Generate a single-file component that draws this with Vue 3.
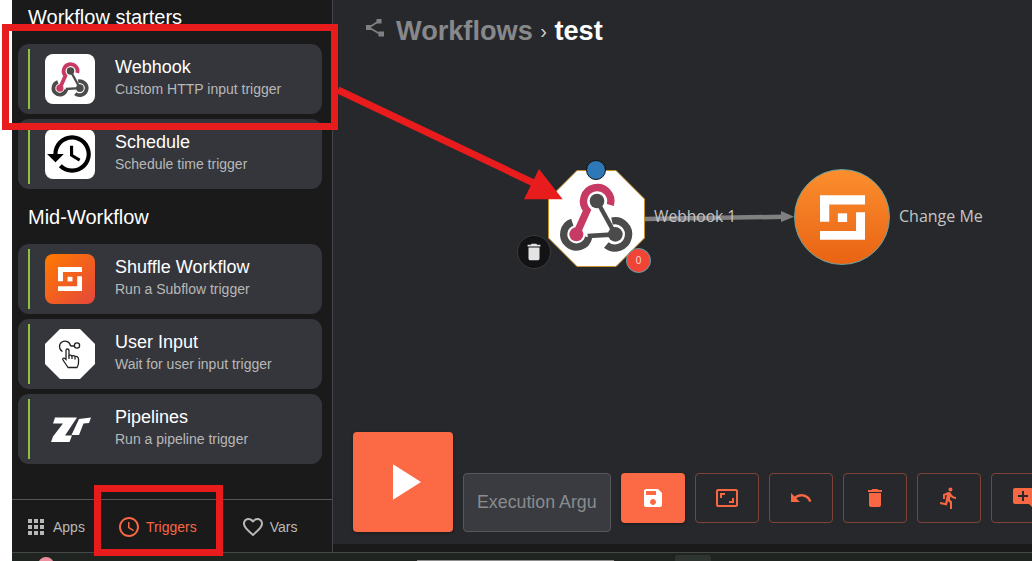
<script setup>
const starters = [
  { title: 'Webhook', sub: 'Custom HTTP input trigger', icon: 'webhook' },
  { title: 'Schedule', sub: 'Schedule time trigger', icon: 'history' },
]
const mids = [
  { title: 'Shuffle Workflow', sub: 'Run a Subflow trigger', icon: 'shuffle' },
  { title: 'User Input', sub: 'Wait for user input trigger', icon: 'touch' },
  { title: 'Pipelines', sub: 'Run a pipeline trigger', icon: 'pipe' },
]
const tools = [
  { name: 'fit', d: 'M19 12h-2v3h-3v2h5v-5zM7 9h3V7H5v5h2V9zm14-6H3c-1.1 0-2 .9-2 2v14c0 1.1.9 2 2 2h18c1.1 0 2-.9 2-2V5c0-1.1-.9-2-2-2zm0 16.01H3V4.99h18v14.02z' },
  { name: 'undo', d: 'M12.5 8c-2.65 0-5.05.99-6.9 2.6L2 7v9h9l-3.62-3.62c1.39-1.16 3.16-1.88 5.12-1.88 3.54 0 6.55 2.31 7.6 5.5l2.37-.78C21.08 11.03 17.15 8 12.5 8z' },
  { name: 'delete', d: 'M6 19c0 1.1.9 2 2 2h8c1.1 0 2-.9 2-2V7H6v12zM19 4h-3.5l-1-1h-5l-1 1H5v2h14V4z' },
  { name: 'run', d: 'M13.49 5.48c1.1 0 2-.9 2-2s-.9-2-2-2-2 .9-2 2 .9 2 2 2zm-3.6 13.9l1-4.4 2.1 2v6h2v-7.5l-2.1-2 .6-3c1.3 1.5 3.3 2.5 5.5 2.5v-2c-1.9 0-3.5-1-4.3-2.4l-1-1.6c-.4-.6-1-1-1.7-1-.3 0-.5.1-.8.1l-5.2 2.2v4.7h2v-3.4l1.8-.7-1.6 8.1-4.9-1-.4 2 7 1.4z' },
  { name: 'comment', d: 'M21.99 4c0-1.1-.89-2-1.99-2H4c-1.1 0-2 .9-2 2v12c0 1.1.9 2 2 2h14l4 4-.01-18zM17 11h-4v4h-2v-4H7V9h4V5h2v4h4v2z' },
]
</script>

<template>
  <div class="page">
    <svg class="defs" aria-hidden="true">
      <defs>
        <symbol id="webhook" viewBox="170 120 240 225">
          <path d="M228 283L260 211A41 41 0 1 1 330 195" fill="none" stroke="#c73a63" stroke-width="22" />
          <circle cx="228" cy="283" r="21" fill="#c73a63" />
          <path d="M290 183L345 283" fill="none" stroke="#4b4b4b" stroke-width="13" />
          <path d="M216 247A38 38 0 1 0 265 292" fill="none" stroke="#4b4b4b" stroke-width="22" />
          <path d="M335 243A41 41 0 1 1 318 315" fill="none" stroke="#4b4b4b" stroke-width="22" />
          <path d="M262 288L345 283" fill="none" stroke="#4b4b4b" stroke-width="14" />
          <circle cx="290" cy="183" r="22" fill="#4b4b4b" />
          <circle cx="345" cy="283" r="22" fill="#4b4b4b" />
        </symbol>
        <symbol id="shuffle" viewBox="0 0 136 135">
          <path d="M0 0H136V28H28V80H0Z" fill="#fff" />
          <path d="M109 52H136V135H0V108H109Z" fill="#fff" />
          <rect x="54" y="55" width="28" height="26" fill="#fff" />
        </symbol>
      </defs>
    </svg>

    <div class="top">
      <aside class="side">
        <div class="list">
          <h2 class="heading first">Workflow starters</h2>
          <div v-for="c in starters" :key="c.title" class="card">
            <span class="bar"></span>
            <span class="tile" :class="c.icon">
              <svg v-if="c.icon === 'webhook'" class="logo-hook"><use href="#webhook" /></svg>
              <svg v-else viewBox="0 0 24 24" class="logo-hist"><path fill="#000" d="M13 3c-4.97 0-9 4.03-9 9H1l3.89 3.89.07.14L9 12H6c0-3.87 3.13-7 7-7s7 3.13 7 7-3.13 7-7 7c-1.93 0-3.68-.79-4.94-2.06l-1.42 1.42C8.27 19.99 10.51 21 13 21c4.97 0 9-4.03 9-9s-4.03-9-9-9zm-1 5v5l4.28 2.54.72-1.21-3.5-2.08V8H12z" /></svg>
            </span>
            <span class="txt"><b class="t">{{ c.title }}</b><span class="s">{{ c.sub }}</span></span>
          </div>
          <h2 class="heading">Mid-Workflow</h2>
          <div v-for="c in mids" :key="c.title" class="card">
            <span class="bar"></span>
            <span class="tile" :class="c.icon">
              <svg v-if="c.icon === 'shuffle'" class="logo-shuf"><use href="#shuffle" /></svg>
              <svg v-else-if="c.icon === 'touch'" viewBox="0 0 50 50" class="logo-full" fill="none" stroke="#222" stroke-width="1.300">
                <path d="M17.500 22.500A5.500 5.500 0 1 1 25.500 17" />
                <path d="M25.500 17H29.500" />
                <circle cx="32" cy="16.500" r="2.600" />
                <path fill="#fff" d="M23 38.500L18 31C17 29.500 18.800 28.500 20 29.500L21 30.500V21.500C21 19.500 24 19.500 24 21.500V26.500C25 25.800 26.500 26 27 27C28 26.300 29.500 26.500 30 27.500C31 27.100 33.500 27.500 33.500 30V34C33.500 36 33 37 32 38.500Z" />
                <path d="M24 26.500V30M27 27V30M30 27.500V30.500" />
              </svg>
              <svg v-else viewBox="0 0 50 50" class="logo-full">
                <path fill="#fff" d="M10 13.500H32L20 31.500H27L24.500 38H6L8 32.500 18 19.500H8Z" />
                <path fill="#fff" d="M34 15L46 13.500 44 19 38.500 19.500 34 31H26.500Z" />
              </svg>
            </span>
            <span class="txt"><b class="t">{{ c.title }}</b><span class="s">{{ c.sub }}</span></span>
          </div>
        </div>
        <nav class="tabs">
          <span class="tab tab-apps">
            <svg viewBox="0 0 24 24" class="ico"><path fill="#b8b8b8" d="M4 8h4V4H4v4zm6 12h4v-4h-4v4zm-6 0h4v-4H4v4zm0-6h4v-4H4v4zm6 0h4v-4h-4v4zm6-10v4h4V4h-4zm-6 4h4V4h-4v4zm6 6h4v-4h-4v4zm0 6h4v-4h-4v4z" /></svg>Apps
          </span>
          <span class="tab tab-trig">
            <svg viewBox="0 0 24 24" class="ico"><path fill="#f86743" d="M11.99 2C6.47 2 2 6.48 2 12s4.47 10 9.99 10C17.52 22 22 17.52 22 12S17.52 2 11.99 2zM12 20c-4.42 0-8-3.58-8-8s3.58-8 8-8 8 3.58 8 8-3.58 8-8 8zm.5-13H11v6l5.25 3.15.75-1.23-4.5-2.67z" /></svg>Triggers
          </span>
          <span class="tab tab-vars">
            <svg viewBox="0 0 24 24" class="ico"><path fill="#b8b8b8" d="M16.5 3c-1.74 0-3.41.81-4.5 2.09C10.91 3.81 9.24 3 7.5 3 4.42 3 2 5.42 2 8.5c0 3.78 3.4 6.86 8.55 11.54L12 21.35l1.45-1.32C18.6 15.36 22 12.28 22 8.5 22 5.42 19.58 3 16.5 3zm-4.4 15.55l-.1.1-.1-.1C7.14 14.24 4 11.39 4 8.5 4 6.5 5.5 5 7.5 5c1.54 0 3.04.99 3.57 2.36h1.87C13.46 5.99 14.96 5 16.5 5c2 0 3.5 1.5 3.5 3.5 0 2.89-3.14 5.74-7.9 10.05z" /></svg>Vars
          </span>
        </nav>
      </aside>

      <main class="main">
        <header class="crumb">
          <svg viewBox="0 0 20 20" class="crumb-ico" fill="#808080" stroke="#808080">
            <path d="M14 3L4 9.500 15 16" fill="none" stroke-width="1.700" />
            <rect x="11.500" y="1" width="5" height="4.500" stroke="none" />
            <rect x="1" y="7" width="5" height="5" stroke="none" />
            <rect x="13.500" y="13.500" width="5.500" height="5" stroke="none" />
          </svg>
          <span class="crumb-a">Workflows</span>
          <span class="crumb-sep">›</span>
          <span class="crumb-b">test</span>
        </header>

        <div class="canvas">
          <svg class="edge" width="160" height="20" viewBox="0 0 160 20">
            <path d="M0 12L138 9.800" stroke="#808080" stroke-width="4.500" fill="none" />
            <path d="M136 4L149 9.700 136 15Z" fill="#808080" />
          </svg>
          <span class="edge-label">Webhook 1</span>

          <div class="hook-node">
            <svg viewBox="0 0 97 97" class="hook-octa">
              <polygon points="29,.5 68,.5 96.500,29 96.500,68 68,96.500 29,96.500 .5,68 .5,29" fill="#fff" stroke="#c9922a" />
            </svg>
            <svg class="hook-logo"><use href="#webhook" /></svg>
            <span class="dot-blue"></span>
            <span class="dot-trash">
              <svg viewBox="0 0 24 24"><path fill="#e4e4e4" d="M6 19c0 1.100.9 2 2 2h8c1.100 0 2-.9 2-2V7H6v12zM19 4h-3.500l-1-1h-5l-1 1H5v2h14V4z" /></svg>
            </span>
            <span class="dot-badge">0</span>
          </div>

          <div class="sub-node"><svg><use href="#shuffle" /></svg></div>
          <span class="sub-label">Change Me</span>
        </div>

        <footer class="toolbar">
          <button class="play">
            <svg viewBox="0 0 30 38"><path d="M0 0L30 19 0 38Z" fill="#fff" /></svg>
          </button>
          <div class="args">Execution Argu</div>
          <button class="btn solid">
            <svg viewBox="0 0 24 24"><path fill="#fff" d="M17 3H5c-1.110 0-2 .9-2 2v14c0 1.100.89 2 2 2h14c1.100 0 2-.9 2-2V7l-4-4zm-5 16c-1.660 0-3-1.340-3-3s1.340-3 3-3 3 1.340 3 3-1.340 3-3 3zm3-10H5V5h10v4z" /></svg>
          </button>
          <button v-for="t in tools" :key="t.name" class="btn">
            <svg viewBox="0 0 24 24"><path fill="#f86743" :d="t.d" /></svg>
          </button>
        </footer>
      </main>
    </div>

    <div class="desk">
      <span class="desk-dot"></span>
      <span class="desk-bar"></span>
      <span class="desk-box"></span>
    </div>

    <div class="mark mark-a"></div>
    <div class="mark mark-b"></div>
    <svg class="mark-arrow" width="1032" height="561" viewBox="0 0 1032 561">
      <path d="M338 90L540 186" stroke="#e81c1c" stroke-width="7" fill="none" />
      <path d="M562.700 199.300L539 169 524 199.300Z" fill="#e81c1c" />
    </svg>
  </div>
</template>

<style>
html, body { margin: 0; background: #fff; overflow: hidden; }
</style>

<style scoped>
.page {
  position: relative;
  width: 1032px;
  height: 561px;
  overflow: hidden;
  background: #fff;
  display: flex;
  flex-direction: column;
  font-family: "Liberation Sans", Arial, sans-serif;
}
.defs { position: absolute; width: 0; height: 0; }
.top {
  margin-left: 12px;
  height: 552px;
  display: flex;
  background: #1a1a1a;
}
.side {
  width: 320px;
  flex: none;
  border-right: 1px solid #44454a;
  display: flex;
  flex-direction: column;
}
.list { flex: 1; padding-left: 6px; }
.heading {
  margin: 0;
  padding-left: 10px;
  height: 50px;
  line-height: 46px;
  font-size: 20px;
  font-weight: 400;
  color: #fff;
}
.heading.first { height: 44px; line-height: 34px; }
.card {
  width: 304px;
  height: 70px;
  margin-bottom: 5px;
  box-sizing: border-box;
  padding-left: 10px;
  display: flex;
  align-items: center;
  background: #35363b;
  border-radius: 11px;
}
.bar { width: 2px; height: 60px; background: #8bc53f; flex: none; }
.tile {
  width: 50px;
  height: 50px;
  margin-left: 15px;
  flex: none;
  background: #fff;
  border-radius: 8px;
  display: flex;
  align-items: center;
  justify-content: center;
}
.tile.shuffle { background: linear-gradient(135deg, #ff7a00, #e4473c); }
.tile.touch {
  border-radius: 0;
  clip-path: polygon(30% 0, 70% 0, 100% 30%, 100% 70%, 70% 100%, 30% 100%, 0 70%, 0 30%);
}
.tile.pipe { background: transparent; }
.logo-hook { width: 41px; height: 39px; }
.logo-hist { width: 50px; height: 50px; }
.logo-shuf { width: 24px; height: 24px; }
.logo-full { width: 50px; height: 50px; }
.txt { margin-left: 20px; margin-bottom: 2px; display: flex; flex-direction: column; }
.t { font-size: 18px; font-weight: 400; color: #fff; line-height: 20px; margin-bottom: 2px; }
.s { font-size: 14px; color: #b8b8b8; line-height: 20px; }
.tabs {
  height: 50px;
  padding-top: 2px;
  border-top: 1px solid #55565a;
  display: flex;
  align-items: center;
}
.tab { display: inline-flex; align-items: center; gap: 5px; font-size: 14px; color: #b8b8b8; }
.tab-apps { margin-left: 12px; }
.tab-trig { margin-left: 32px; color: #f86743; }
.tab-vars { margin-left: 44px; }
.ico { width: 24px; height: 24px; }
.main {
  flex: 1;
  height: 544px;
  min-width: 0;
  overflow: hidden;
  background: #27282c;
  display: flex;
  flex-direction: column;
}
.crumb {
  height: 62px;
  flex: none;
  box-sizing: border-box;
  padding-left: 32px;
  display: flex;
  align-items: center;
  font-weight: 700;
  font-size: 27.150px;
}
.crumb-ico { width: 20px; height: 20px; margin-right: 11px; margin-top: -6px; }
.crumb-a { color: #87888b; }
.crumb-sep { color: #d0d0d0; font-size: 20px; font-weight: 400; margin: 0 7.500px; }
.crumb-b { color: #fff; }
.canvas { position: relative; flex: 1; min-height: 0; }
.edge { position: absolute; left: 312px; top: 145px; }
.edge-label {
  position: absolute;
  left: 321px;
  top: 143px;
  font: 15.600px/22px "Open Sans", sans-serif;
  color: #c4c4c4;
}
.hook-node { position: absolute; left: 215px; top: 108px; width: 97px; height: 97px; }
.hook-octa { display: block; width: 97px; height: 97px; }
.hook-logo { position: absolute; left: 9px; top: 10px; width: 80px; height: 75px; }
.dot-blue {
  position: absolute;
  left: 38px;
  top: -10px;
  width: 20px;
  height: 20px;
  box-sizing: border-box;
  border: 1px solid #111;
  border-radius: 50%;
  background: #2f78b8;
}
.dot-trash {
  position: absolute;
  left: -31px;
  top: 65px;
  width: 34px;
  height: 34px;
  box-sizing: border-box;
  border: 1px solid #3a3a3a;
  border-radius: 50%;
  background: #131315;
  display: flex;
  align-items: center;
  justify-content: center;
}
.dot-trash svg { width: 22px; height: 22px; }
.dot-badge {
  position: absolute;
  left: 78px;
  top: 78px;
  width: 25px;
  height: 25px;
  box-sizing: border-box;
  border: 1px solid #5fa5ad;
  border-radius: 50%;
  background: #ef4436;
  color: #f3d6d0;
  font-size: 10px;
  line-height: 23px;
  text-align: center;
}
.sub-node {
  position: absolute;
  left: 461px;
  top: 107px;
  width: 96px;
  height: 96px;
  box-sizing: border-box;
  border: 1px solid #6aa3a0;
  border-radius: 50%;
  background: linear-gradient(180deg, #fb8e2e, #e96313);
  display: flex;
  align-items: center;
  justify-content: center;
}
.sub-node svg { width: 45px; height: 45px; }
.sub-label {
  position: absolute;
  left: 566px;
  top: 143px;
  font: 16px/22px "Open Sans", sans-serif;
  color: #c4c4c4;
}
.toolbar {
  flex: none;
  height: 112px;
  box-sizing: border-box;
  padding: 0 0 12px 20px;
  display: flex;
  align-items: flex-end;
  gap: 10px;
}
.play {
  width: 100px;
  height: 100px;
  flex: none;
  padding: 0;
  border: 0;
  border-radius: 4px;
  background: #fb6a45;
  display: flex;
  align-items: center;
  justify-content: center;
  box-shadow: 0 1px 3px rgba(0, 0, 0, .4);
}
.play svg { width: 28px; height: 36px; margin-left: 7px; }
.args {
  width: 148px;
  height: 59px;
  flex: none;
  box-sizing: border-box;
  padding-left: 13px;
  border: 1px solid #56585c;
  border-radius: 4px;
  background: #393b40;
  color: #8a8b8e;
  font-size: 17.800px;
  line-height: 57px;
  white-space: nowrap;
  overflow: hidden;
}
.btn {
  width: 64px;
  height: 50px;
  flex: none;
  padding: 0;
  margin-bottom: 9px;
  box-sizing: border-box;
  border: 1px solid #7d4337;
  border-radius: 4px;
  background: transparent;
  display: flex;
  align-items: center;
  justify-content: center;
}
.btn.solid { background: #fb6a45; border: 0; box-shadow: 0 1px 3px rgba(0, 0, 0, .4); }
.btn svg { width: 24px; height: 24px; }
.desk {
  position: relative;
  margin-left: 12px;
  flex: 1;
  box-sizing: border-box;
  border-top: 1px solid #45474a;
  background: #1f2420;
}
.desk-dot {
  position: absolute;
  left: 26px;
  top: 4px;
  width: 16px;
  height: 16px;
  border-radius: 50%;
  background: #ee8fa0;
}
.desk-bar {
  position: absolute;
  left: 405px;
  top: 7px;
  width: 197px;
  height: 2px;
  background: #8d8d8d;
}
.desk-box {
  position: absolute;
  left: 663px;
  top: 2px;
  width: 36px;
  height: 8px;
  border-radius: 3px 3px 0 0;
  background: #2e3430;
}
.mark {
  position: absolute;
  box-sizing: border-box;
  border: 7px solid #e81c1c;
  pointer-events: none;
}
.mark-a { left: 2px; top: 24px; width: 336px; height: 106px; }
.mark-b { left: 94px; top: 485px; width: 129px; height: 71px; }
.mark-arrow { position: absolute; left: 0; top: 0; pointer-events: none; }
</style>
